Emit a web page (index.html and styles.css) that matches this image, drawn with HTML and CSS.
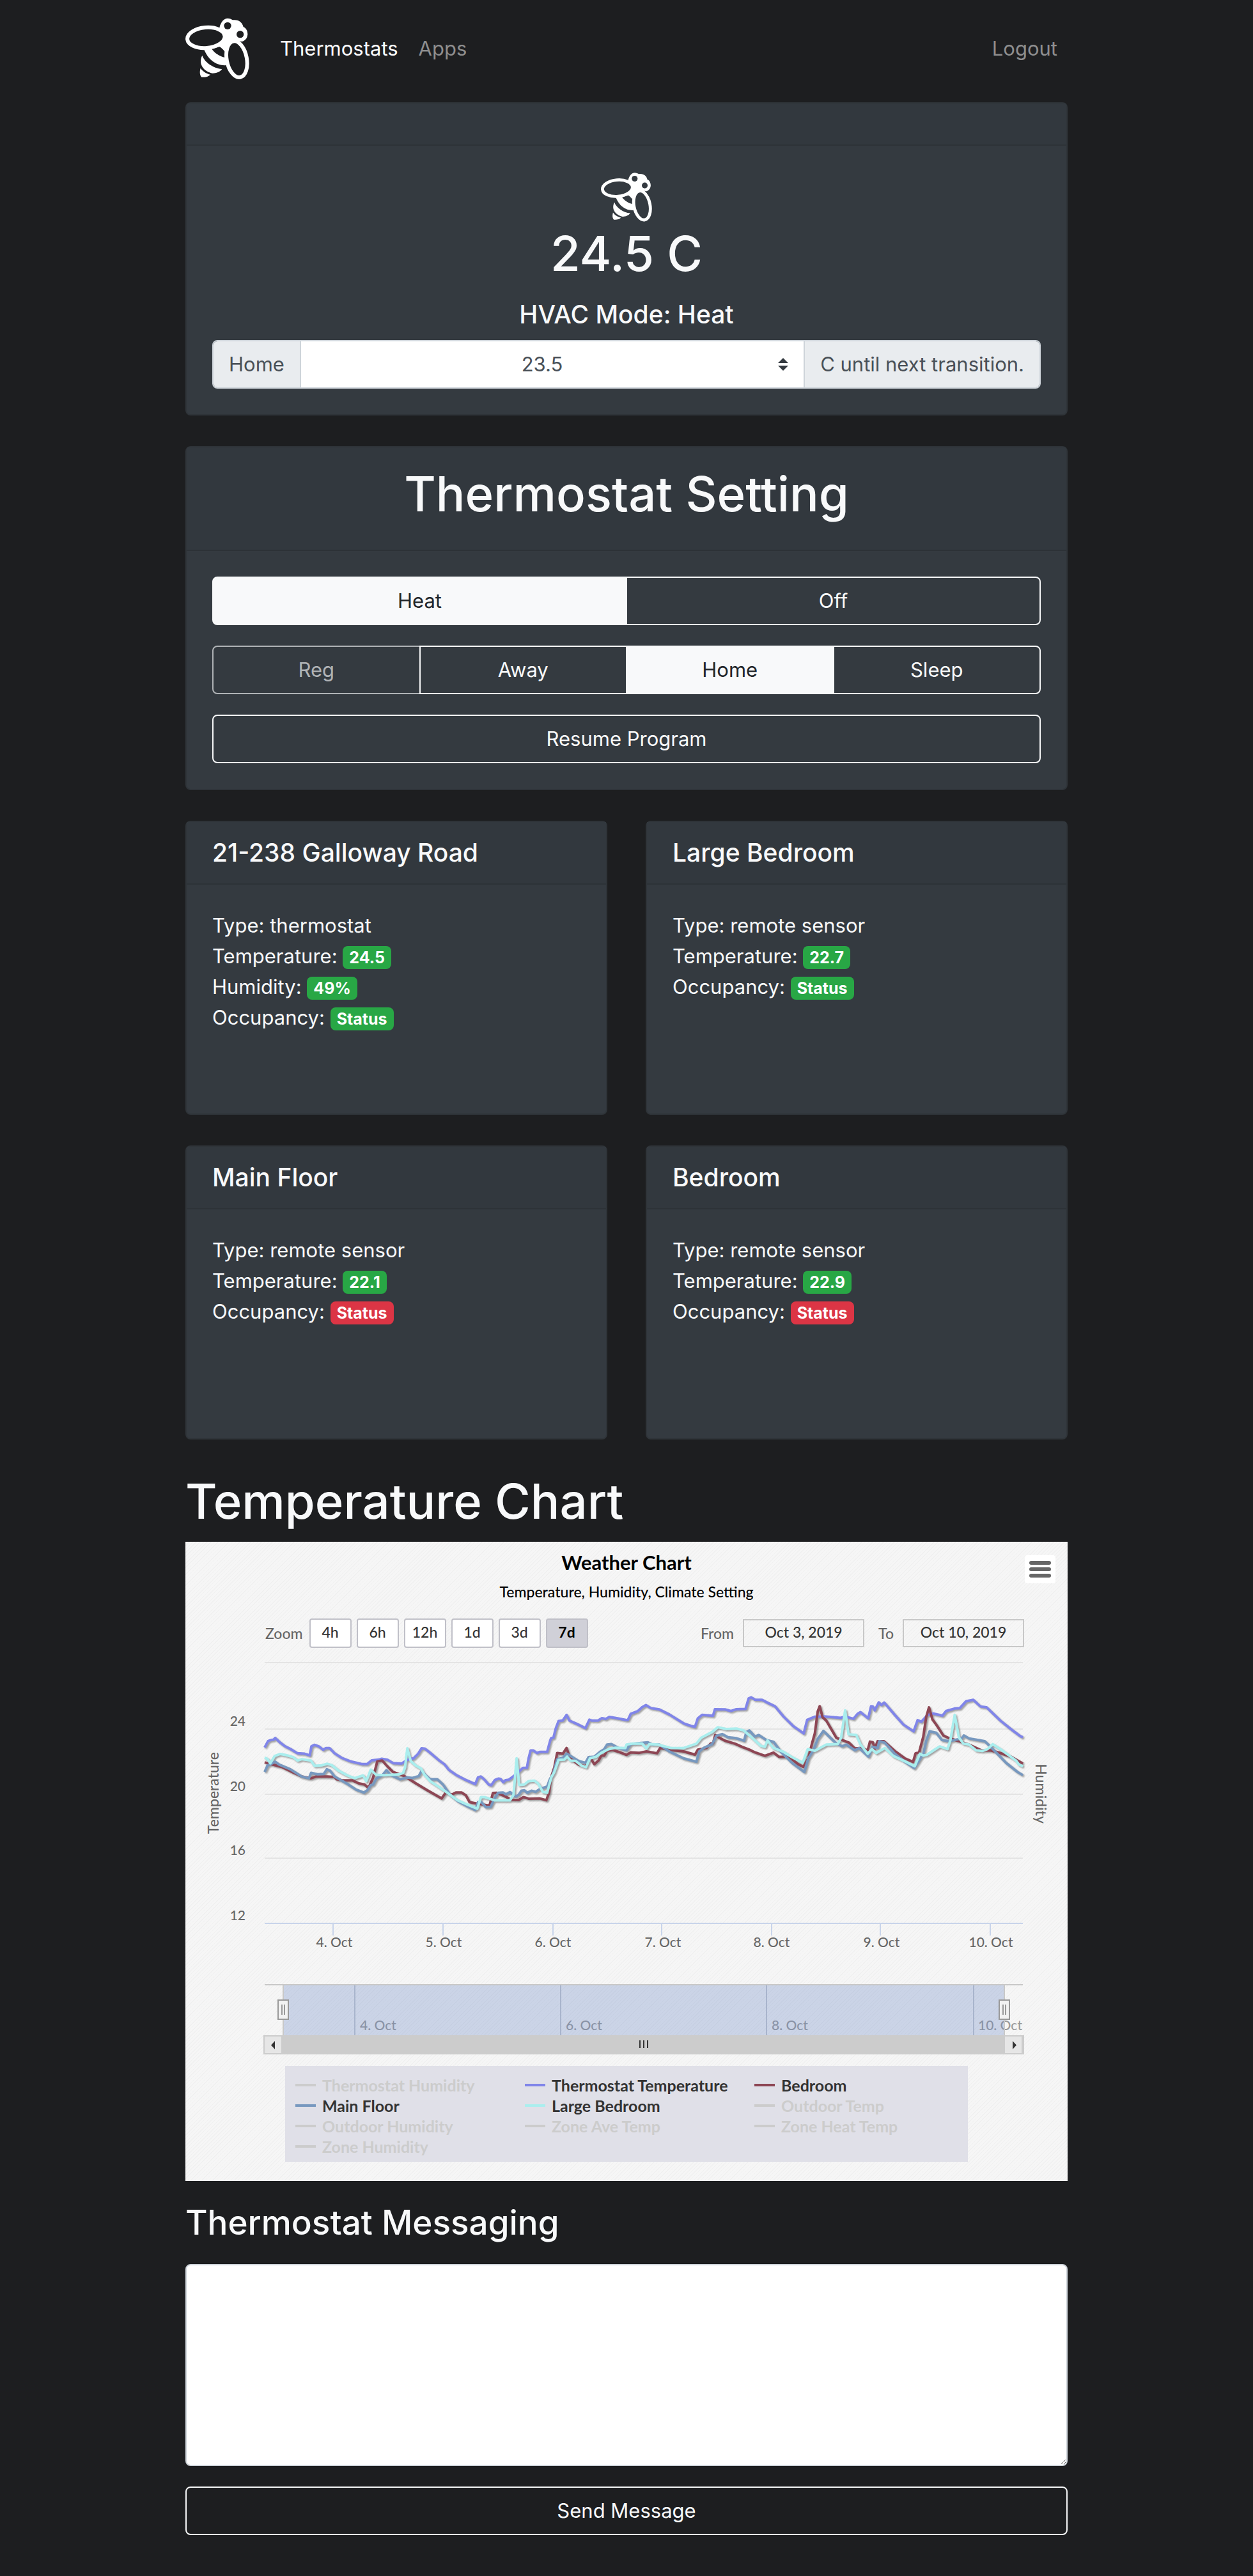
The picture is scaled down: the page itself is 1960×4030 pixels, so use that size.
FILE: index.html
```html
<!DOCTYPE html>
<html lang="en">
<head>
<meta charset="utf-8">
<meta name="viewport" content="width=device-width, initial-scale=1">
<title>Thermostats</title>
<link rel="stylesheet" href="styles.css">
</head>
<body>
<svg class="sprite" aria-hidden="true">
  <symbol id="bee" viewBox="30 83 300 286">
    <path fill="currentColor" d="M190 128 C196 100 212 84 228 84 C238 84 246 88 252 92 C280 88 298 104 302 124 C318 132 322 146 322 160 C320 180 308 190 296 193 L255 186 L228 205 L215 240 L213 238 C206 229 198 222 190 217 L165 224 L200 200 Z"/>
    <ellipse class="bee-wing" cx="127" cy="175" rx="88" ry="48" transform="rotate(-5 127 175)"/>
    <ellipse class="bee-wing" cx="271" cy="276" rx="47" ry="86" transform="rotate(-11 271 276)"/>
    <circle class="bee-eye" cx="228" cy="119" r="17"/>
    <circle class="bee-eye" cx="287" cy="159" r="17"/>
    <path fill="currentColor" d="M116 226 L153 226 C165 246 190 263 216 268 L224 304 C180 308 138 284 116 226 Z"/>
    <path fill="currentColor" d="M109 258 C120 290 160 318 202 322 C192 336 175 342 158 342 C118 334 88 300 109 258 Z"/>
    <path fill="currentColor" d="M101 318 C110 332 128 344 148 348 C138 358 120 362 106 360 C96 350 97 332 101 318 Z"/>
  </symbol>
</svg>

<div class="page">
  <header class="navbar">
    <a class="brand" href="#" aria-label="Home"><svg class="bee bee-nav"><use href="#bee"/></svg></a>
    <nav class="nav-links">
      <a class="nav-link active" href="#">Thermostats</a>
      <a class="nav-link" href="#">Apps</a>
      <a class="nav-link logout" href="#">Logout</a>
    </nav>
  </header>

  <main class="content">
    <section class="card">
      <div class="card-header card-header-empty"></div>
      <div class="card-body status">
        <svg class="bee bee-small" aria-hidden="true"><use href="#bee"/></svg>
        <h1 class="title">24.5 C</h1>
        <h2 class="subtitle">HVAC Mode: Heat</h2>
        <div class="input-group">
          <label class="addon" for="setpoint">Home</label>
          <select class="setpoint" id="setpoint"><option>23.5</option></select>
          <span class="addon">C until next transition.</span>
        </div>
      </div>
    </section>

    <section class="card">
      <div class="card-header card-header-title"><h1 class="title">Thermostat Setting</h1></div>
      <div class="card-body settings">
        <div class="btn-group">
          <button class="btn active" type="button">Heat</button>
          <button class="btn" type="button">Off</button>
        </div>
        <div class="btn-group">
          <button class="btn" type="button" disabled>Reg</button>
          <button class="btn" type="button">Away</button>
          <button class="btn active" type="button">Home</button>
          <button class="btn" type="button">Sleep</button>
        </div>
        <button class="btn" type="button">Resume Program</button>
      </div>
    </section>

    <div class="sensors">
      <section class="card sensor">
        <div class="card-header"><h2 class="subtitle">21-238 Galloway Road</h2></div>
        <div class="card-body">
          <div>Type: thermostat</div>
          <div>Temperature: <span class="badge">24.5</span></div>
          <div>Humidity: <span class="badge">49%</span></div>
          <div>Occupancy: <span class="badge">Status</span></div>
        </div>
      </section>
      <section class="card sensor">
        <div class="card-header"><h2 class="subtitle">Large Bedroom</h2></div>
        <div class="card-body">
          <div>Type: remote sensor</div>
          <div>Temperature: <span class="badge">22.7</span></div>
          <div>Occupancy: <span class="badge">Status</span></div>
        </div>
      </section>
      <section class="card sensor">
        <div class="card-header"><h2 class="subtitle">Main Floor</h2></div>
        <div class="card-body">
          <div>Type: remote sensor</div>
          <div>Temperature: <span class="badge">22.1</span></div>
          <div>Occupancy: <span class="badge danger">Status</span></div>
        </div>
      </section>
      <section class="card sensor">
        <div class="card-header"><h2 class="subtitle">Bedroom</h2></div>
        <div class="card-body">
          <div>Type: remote sensor</div>
          <div>Temperature: <span class="badge">22.9</span></div>
          <div>Occupancy: <span class="badge danger">Status</span></div>
        </div>
      </section>
    </div>

    <section class="chart-section">
      <h1 class="title">Temperature Chart</h1>
      <div class="chart">
        <button class="chart-menu" type="button" aria-label="Chart menu"><span class="bar"></span><span class="bar"></span><span class="bar"></span></button>
        <h2 class="chart-title">Weather Chart</h2>
        <p class="chart-subtitle">Temperature, Humidity, Climate Setting</p>
        <div class="toolbar">
          <span class="tool-label">Zoom</span>
          <div class="zooms">
            <button class="zoom" type="button">4h</button>
            <button class="zoom" type="button">6h</button>
            <button class="zoom" type="button">12h</button>
            <button class="zoom" type="button">1d</button>
            <button class="zoom" type="button">3d</button>
            <button class="zoom selected" type="button">7d</button>
          </div>
          <div class="range">
            <label class="tool-label" for="from">From</label>
            <input class="date" id="from" type="text" value="Oct 3, 2019">
            <label class="tool-label label-to" for="to">To</label>
            <input class="date" id="to" type="text" value="Oct 10, 2019">
          </div>
        </div>
        <svg class="plot" viewBox="0 0 1380 634" role="img" aria-label="Temperature over the last seven days">
          <path class="grid" d="M124 11H1310M124 115H1310M124 217H1310M124 317H1310"/>
          <path class="axis" d="M124 419H1310M231 419V438M403 419V438M575 419V438M745 419V438M917 419V438M1087 419V438M1259 419V438"/>
          <g class="tick tick-y">
            <text x="94" y="110">24</text><text x="94" y="212">20</text><text x="94" y="312">16</text><text x="94" y="414">12</text>
          </g>
          <g class="tick tick-x">
            <text x="233" y="456">4. Oct</text><text x="404" y="456">5. Oct</text><text x="575" y="456">6. Oct</text><text x="747" y="456">7. Oct</text><text x="917" y="456">8. Oct</text><text x="1089" y="456">9. Oct</text><text x="1260" y="456">10. Oct</text>
          </g>
          <text class="axis-name" transform="translate(52 215) rotate(-90)">Temperature</text>
          <text class="axis-name" transform="translate(1330 216) rotate(90)">Humidity</text>
          <g class="series-layer">
            <svg id="series" x="-10" y="-300" width="1400" height="560" viewBox="0 0 3136 1568" preserveAspectRatio="none"></svg>
          </g>
          <path class="nav-grid" d="M265 516V594M587 516V594M909 516V594M1233 516V594"/>
          <g class="nav-label">
            <text x="273" y="586">4. Oct</text><text x="595" y="586">6. Oct</text><text x="917" y="586">8. Oct</text><text x="1240" y="586">10. Oct</text>
          </g>
          <rect class="nav-mask" x="153" y="515" width="1128" height="79"/>
          <path class="nav-line" d="M124 515H1310M153 515V594M1281 515V594"/>
          <g class="handle">
            <rect x="145" y="539" width="16" height="30"/><path d="M151 546V562M155 546V562"/>
            <rect x="1273" y="539" width="16" height="30"/><path d="M1279 546V562M1283 546V562"/>
          </g>
          <rect class="scroll-track" x="122" y="594" width="1190" height="30"/>
          <rect class="scroll-button" x="124" y="596" width="26" height="26"/>
          <rect class="scroll-button" x="1282" y="596" width="26" height="26"/>
          <path class="scroll-mark" d="M140 603V616L134 609.5ZM1294 603V616L1300 609.5ZM710 602h2v12h-2zM716 602h2v12h-2zM722 602h2v12h-2z"/>
        </svg>
        <div class="legend">
          <button class="key off" type="button">Thermostat Humidity</button>
          <button class="key thermostat" type="button">Thermostat Temperature</button>
          <button class="key bedroom" type="button">Bedroom</button>
          <button class="key main-floor" type="button">Main Floor</button>
          <button class="key large-bedroom" type="button">Large Bedroom</button>
          <button class="key off" type="button">Outdoor Temp</button>
          <button class="key off" type="button">Outdoor Humidity</button>
          <button class="key off" type="button">Zone Ave Temp</button>
          <button class="key off" type="button">Zone Heat Temp</button>
          <button class="key off" type="button">Zone Humidity</button>
        </div>
      </div>
    </section>

    <form class="messaging">
      <h3 class="section-title"><label for="message">Thermostat Messaging</label></h3>
      <textarea class="message" id="message" rows="6"></textarea>
      <button class="btn" type="button">Send Message</button>
    </form>
  </main>
</div>
<script src="chart.js"></script>
</body>
</html>
```
FILE: chart.js
```js
// Each series is stored as two half-weeks of "x,y" points; the second half starts at HALF.
const HALF = 1568;
const series = [
  {
    color: '#8085e9',
    early: '300,1243 312,1215 322,1210 332,1208 337,1201 355,1222 370,1236 390,1249 415,1268 440,1270 458,1277 464,1238 475,1231 490,1238 505,1253 515,1245 527,1245 545,1268 570,1288 600,1303 640,1315 660,1315 675,1299 700,1296 710,1292 730,1296 750,1311 780,1313 800,1297 822,1290 838,1270 850,1246 862,1248 880,1266 910,1298 930,1316 945,1340 970,1362 1000,1382 1038,1403 1048,1373 1058,1370 1070,1383 1085,1405 1094,1408 1107,1385 1120,1379 1127,1381 1136,1395 1144,1386 1155,1384 1175,1366 1190,1350 1205,1332 1219,1332 1225,1290 1232,1256 1242,1256 1254,1267 1265,1262 1290,1262 1300,1215 1304,1202 1312,1200 1320,1160 1330,1127 1345,1124 1358,1100 1368,1125 1395,1140 1424,1158 1438,1121 1447,1125 1468,1125 1482,1114 1495,1118 1508,1109 1540,1116 1568,1123',
    late: '5,1122 15,1095 40,1083 55,1066 68,1057 85,1070 115,1076 150,1098 200,1137 225,1148 240,1152 250,1115 265,1100 303,1104 310,1075 345,1076 365,1083 385,1075 417,1074 428,1028 437,1023 450,1033 475,1034 490,1044 520,1062 550,1107 585,1150 621,1181 633,1122 660,1108 690,1107 715,1109 750,1113 766,1107 795,1117 810,1095 820,1088 847,1115 857,1062 863,1063 870,1080 884,1045 893,1057 903,1046 940,1100 970,1142 1006,1172 1020,1123 1033,1130 1055,1100 1075,1094 1107,1103 1120,1083 1150,1072 1168,1070 1190,1040 1215,1034 1240,1063 1262,1067 1310,1125 1350,1165 1380,1193 1389,1198'
  },
  {
    color: '#8d4654',
    early: '300,1308 330,1318 360,1328 400,1352 430,1370 462,1378 480,1370 520,1370 545,1372 552,1382 575,1387 608,1387 630,1400 650,1405 664,1420 680,1375 695,1303 712,1300 730,1325 750,1350 790,1368 830,1400 870,1430 920,1466 935,1440 955,1450 970,1440 990,1440 1005,1452 1018,1482 1050,1490 1088,1497 1100,1442 1112,1441 1140,1455 1165,1472 1190,1473 1207,1460 1225,1467 1265,1466 1287,1474 1297,1440 1303,1376 1315,1330 1325,1267 1345,1270 1358,1245 1370,1290 1400,1318 1424,1325 1440,1285 1455,1316 1470,1300 1480,1278 1490,1278 1500,1257 1520,1254 1545,1264 1568,1275',
    late: '15,1264 45,1266 70,1260 107,1268 118,1245 150,1253 200,1260 240,1274 250,1252 280,1245 295,1225 303,1225 311,1188 325,1200 345,1213 380,1226 405,1240 430,1252 450,1264 485,1279 515,1265 535,1284 570,1284 600,1315 620,1328 637,1290 650,1225 660,1180 670,1085 677,1062 687,1110 700,1125 735,1200 780,1222 800,1247 820,1245 845,1255 853,1217 863,1220 870,1248 880,1215 902,1215 940,1258 975,1290 1004,1306 1013,1268 1025,1265 1040,1195 1050,1110 1060,1067 1072,1120 1085,1142 1110,1190 1130,1202 1160,1213 1200,1230 1245,1256 1275,1255 1310,1267 1350,1285 1389,1313'
  },
  {
    color: '#7798bf',
    early: '300,1350 310,1322 322,1315 337,1305 350,1317 390,1338 430,1370 455,1378 463,1354 485,1360 507,1359 518,1338 530,1345 545,1370 590,1402 620,1427 648,1440 660,1430 672,1408 680,1405 692,1378 712,1365 727,1342 740,1362 775,1382 800,1374 818,1376 840,1368 850,1345 862,1362 880,1382 905,1382 925,1405 950,1450 980,1480 1010,1500 1038,1517 1048,1482 1060,1483 1075,1504 1092,1503 1104,1470 1118,1441 1135,1440 1145,1448 1160,1438 1180,1458 1190,1450 1200,1432 1210,1430 1220,1441 1235,1432 1250,1437 1265,1424 1290,1414 1300,1380 1310,1362 1325,1295 1345,1288 1358,1270 1375,1282 1400,1302 1424,1310 1435,1285 1455,1283 1475,1262 1490,1250 1500,1230 1515,1228 1540,1245 1568,1255',
    late: '5,1245 15,1228 40,1224 75,1220 90,1230 115,1230 150,1260 200,1290 245,1305 255,1260 270,1245 300,1228 315,1192 335,1184 355,1198 385,1202 412,1213 420,1175 430,1168 450,1195 463,1188 490,1210 515,1218 540,1260 580,1310 623,1350 637,1290 655,1255 670,1205 690,1170 710,1195 735,1225 755,1237 770,1230 800,1255 815,1245 848,1283 862,1240 880,1245 886,1215 905,1222 940,1270 975,1305 1008,1333 1020,1310 1040,1270 1050,1215 1062,1172 1085,1178 1105,1210 1130,1215 1175,1203 1182,1190 1200,1203 1255,1215 1280,1245 1330,1310 1370,1350 1389,1364'
  },
  {
    color: '#aaeeee',
    early: '300,1287 310,1293 320,1312 335,1280 355,1271 375,1276 400,1285 415,1300 430,1294 462,1300 475,1323 500,1321 520,1314 535,1320 560,1345 590,1365 615,1377 645,1365 656,1390 672,1340 690,1362 720,1364 770,1361 785,1355 792,1330 800,1246 812,1302 830,1322 848,1335 860,1362 880,1390 930,1432 975,1473 1010,1493 1045,1511 1058,1460 1070,1460 1105,1474 1160,1474 1172,1450 1183,1290 1192,1407 1210,1405 1225,1390 1245,1388 1258,1400 1275,1437 1290,1441 1305,1372 1315,1350 1330,1297 1350,1296 1360,1283 1372,1300 1390,1302 1410,1322 1426,1329 1440,1290 1462,1283 1480,1266 1505,1250 1530,1244 1564,1245',
    late: '0,1230 20,1226 55,1226 70,1247 80,1228 110,1230 155,1245 200,1245 245,1226 262,1200 300,1175 320,1154 350,1162 385,1160 410,1168 440,1200 470,1235 485,1240 494,1212 515,1245 550,1262 580,1285 617,1310 635,1250 660,1257 700,1230 740,1228 752,1200 766,1080 778,1185 805,1188 820,1230 845,1270 860,1250 875,1267 905,1245 935,1280 975,1303 1010,1325 1028,1270 1040,1278 1052,1275 1070,1260 1097,1238 1125,1250 1135,1210 1150,1100 1165,1200 1180,1225 1200,1230 1225,1255 1247,1258 1265,1250 1283,1228 1310,1250 1345,1282 1365,1300 1375,1317 1389,1325'
  }
];

const parse = (text, shift) => text.split(' ').map(pair => {
  const [x, y] = pair.split(',').map(Number);
  return `${x + shift},${y}`;
});

const layer = document.getElementById('series');
for (const { color, early, late } of series) {
  const line = document.createElementNS('http://www.w3.org/2000/svg', 'polyline');
  line.setAttribute('class', 'series');
  line.setAttribute('stroke', color);
  line.setAttribute('points', [...parse(early, 0), ...parse(late, HALF)].join(' '));
  layer.append(line);
}
```
FILE: styles.css
```css
* { box-sizing: border-box; }

body {
  margin: 0;
  background: #1d1e20;
  color: #f8f9fa;
  font: 400 31px/48px Inter, "Liberation Sans", sans-serif;
}

h1, h2, h3, p { margin: 0; }
button, input, select, textarea { font: inherit; }

.sprite { position: absolute; width: 0; height: 0; }

.page {
  width: calc(100% - 60px);
  max-width: 1380px;
  margin: 0 auto;
  padding-bottom: 64px;
}

/* Navigation */
.navbar {
  display: flex;
  align-items: center;
  gap: 48px;
  padding: 28px 16px 36px 0;
}
.brand { display: flex; color: #fff; }
.bee { display: block; }
.bee-nav { width: 100px; height: 96px; --bee-bg: #1d1e20; }
.bee-small { width: 80px; height: 80px; margin: 0 auto; color: #fff; --bee-bg: #343a40; }
.bee-wing { fill: var(--bee-bg); stroke: currentColor; stroke-width: 18; }
.bee-eye { fill: var(--bee-bg); }
.nav-links { display: flex; flex: 1; gap: 32px; }
.nav-link { color: #8e8e8f; text-decoration: none; }
.nav-link.active { color: #fff; }
.logout { margin-left: auto; }

/* Headings */
.title { font-size: 76px; line-height: 96px; font-weight: 500; }
.subtitle { font-size: 39px; line-height: 48px; font-weight: 500; }
.section-title { font-size: 53px; line-height: 66px; font-weight: 500; }

/* Cards */
.content { display: flex; flex-direction: column; gap: 48px; }
.card {
  border: 2px solid #2f3439;
  border-radius: 8px;
  background: #343a40;
}
.card-header {
  padding: 24px 40px;
  border-bottom: 2px solid #2d3237;
  background: #32383e;
}
.card-header-empty { padding: 32px; }
.card-header-title { padding-bottom: 40px; text-align: center; }
.card-body { padding: 40px; }
.status { text-align: center; }
.status .subtitle { margin: 24px 0 16px; }

.input-group {
  display: flex;
  height: 76px;
  border: 2px solid #ced4da;
  border-radius: 8px;
  overflow: hidden;
  color: #495057;
}
.addon {
  padding: 12px 24px;
  background: #e9ecef;
}
.setpoint {
  flex: 1;
  min-width: 0;
  padding: 0 56px 0 24px;
  border: 0 solid #ced4da;
  border-width: 0 2px;
  appearance: none;
  color: #495057;
  text-align: center;
  text-align-last: center;
  background: #fff url("data:image/svg+xml,%3Csvg xmlns='http://www.w3.org/2000/svg' viewBox='0 0 4 5'%3E%3Cpath fill='%23343a40' d='M2 0L0 2h4zm0 5L0 3h4z'/%3E%3C/svg%3E") no-repeat right 24px center / 16px 20px;
}

/* Buttons */
.settings { display: flex; flex-direction: column; gap: 32px; }
.btn-group { display: flex; }
.btn {
  height: 76px;
  padding: 0 24px;
  border: 2px solid #f8f9fa;
  border-radius: 8px;
  background: transparent;
  color: #f8f9fa;
}
.btn.active { background: #f8f9fa; color: #212529; }
.btn:disabled { border-color: #b0b3b6; color: #b0b3b6; }
.btn-group .btn { flex: 1; border-radius: 0; }
.btn-group .btn:first-child { border-radius: 8px 0 0 8px; }
.btn-group .btn:last-child { border-radius: 0 8px 8px 0; }
.btn-group .btn + .btn { margin-left: -2px; }

/* Sensors */
.sensors {
  display: grid;
  grid-template-columns: 1fr 1fr;
  gap: 48px 60px;
}
.sensor { min-height: 460px; }
.badge {
  display: inline-block;
  padding: 6px 10px;
  border-radius: 8px;
  background: #28a745;
  color: #fff;
  font-size: 25px;
  line-height: 24px;
  font-weight: 700;
  vertical-align: baseline;
}
.badge.danger { background: #dc3545; }

/* Chart */
.chart-section { display: flex; flex-direction: column; gap: 16px; }
.chart {
  position: relative;
  padding: 12px 0 30px;
  background:
    repeating-linear-gradient(135deg, rgba(0, 0, 0, .025) 0 1px, transparent 1px 4px),
    #f6f6f6;
  color: #000;
  font: 500 23px/32px Lato, "Liberation Sans", sans-serif;
}
.chart-menu {
  position: absolute;
  top: 21px;
  right: 19px;
  display: flex;
  flex-direction: column;
  justify-content: center;
  gap: 4px;
  width: 48px;
  height: 44px;
  padding: 0 7px;
  border: 0;
  border-radius: 4px;
  background: #fff;
}
.bar { height: 6px; border-radius: 3px; background: #666; }
.chart-title { font-size: 31px; line-height: 40px; font-weight: 700; text-align: center; }
.chart-subtitle { margin-top: 10px; text-align: center; }
.toolbar {
  display: flex;
  align-items: center;
  gap: 10px;
  margin: 26px 68px 12px 125px;
}
.tool-label { color: #666; }
.zooms { display: flex; gap: 8px; }
.zoom {
  width: 66px;
  height: 46px;
  padding: 0 0 4px;
  border: 2px solid #c0c0c8;
  border-radius: 4px;
  background: #fff;
  color: #333;
}
.zoom.selected { background: #d0d0d8; color: #000; font-weight: 700; }
.range { display: flex; align-items: center; gap: 14px; margin-left: auto; }
.label-to { margin-left: 8px; }
.date {
  width: 190px;
  height: 44px;
  padding: 0 0 4px;
  border: 2px solid #c8c8c8;
  background: transparent;
  color: #333;
  text-align: center;
}

.plot { display: block; width: 100%; }
.plot path { fill: none; stroke-width: 2; }
.plot .grid { stroke: #e4e4e4; }
.plot .axis { stroke: #c8d4ea; }
.tick, .nav-label { fill: #666; font-size: 21px; }
.tick-y { text-anchor: end; }
.tick-x { text-anchor: middle; }
.axis-name { fill: #666; text-anchor: middle; }
.series-layer { filter: drop-shadow(2px 2px 1px rgba(0, 0, 0, .35)); }
.series {
  fill: none;
  stroke-width: 4;
  stroke-linejoin: round;
  vector-effect: non-scaling-stroke;
}
.plot .nav-grid { stroke: #c4c9d0; }
.nav-label { fill: #999; }
.nav-mask { fill: rgba(102, 133, 194, .3); }
.plot .nav-line { stroke: #c8c8c8; }
.handle rect { fill: #f2f2f2; stroke: #999; stroke-width: 2; }
.plot .handle path { stroke: #999; }
.scroll-track { fill: #ccc; }
.scroll-button { fill: #e6e6e6; }
.plot .scroll-mark { fill: #333; }

.legend {
  display: grid;
  grid-template-columns: 359px 359px 1fr;
  margin: 8px 156px 0;
  padding: 14px 16px 8px;
  background: #e0e0e8;
}
.key {
  display: flex;
  align-items: center;
  gap: 10px;
  height: 32px;
  padding: 0;
  border: 0;
  background: none;
  color: #333;
  font-size: 25px;
  font-weight: 700;
  white-space: nowrap;
}
.key::before { content: ""; width: 32px; height: 4px; background: currentColor; }
.key.off { color: #ccc; }
.thermostat::before { background: #8085e9; }
.bedroom::before { background: #8d4654; }
.main-floor::before { background: #7798bf; }
.large-bedroom::before { background: #aaeeee; }

/* Messaging */
.messaging { display: flex; flex-direction: column; gap: 32px; margin-top: -16px; }
.message {
  height: 316px;
  padding: 12px 24px;
  border: 2px solid #ced4da;
  border-radius: 8px;
  background: #fff;
  resize: vertical;
}
```
